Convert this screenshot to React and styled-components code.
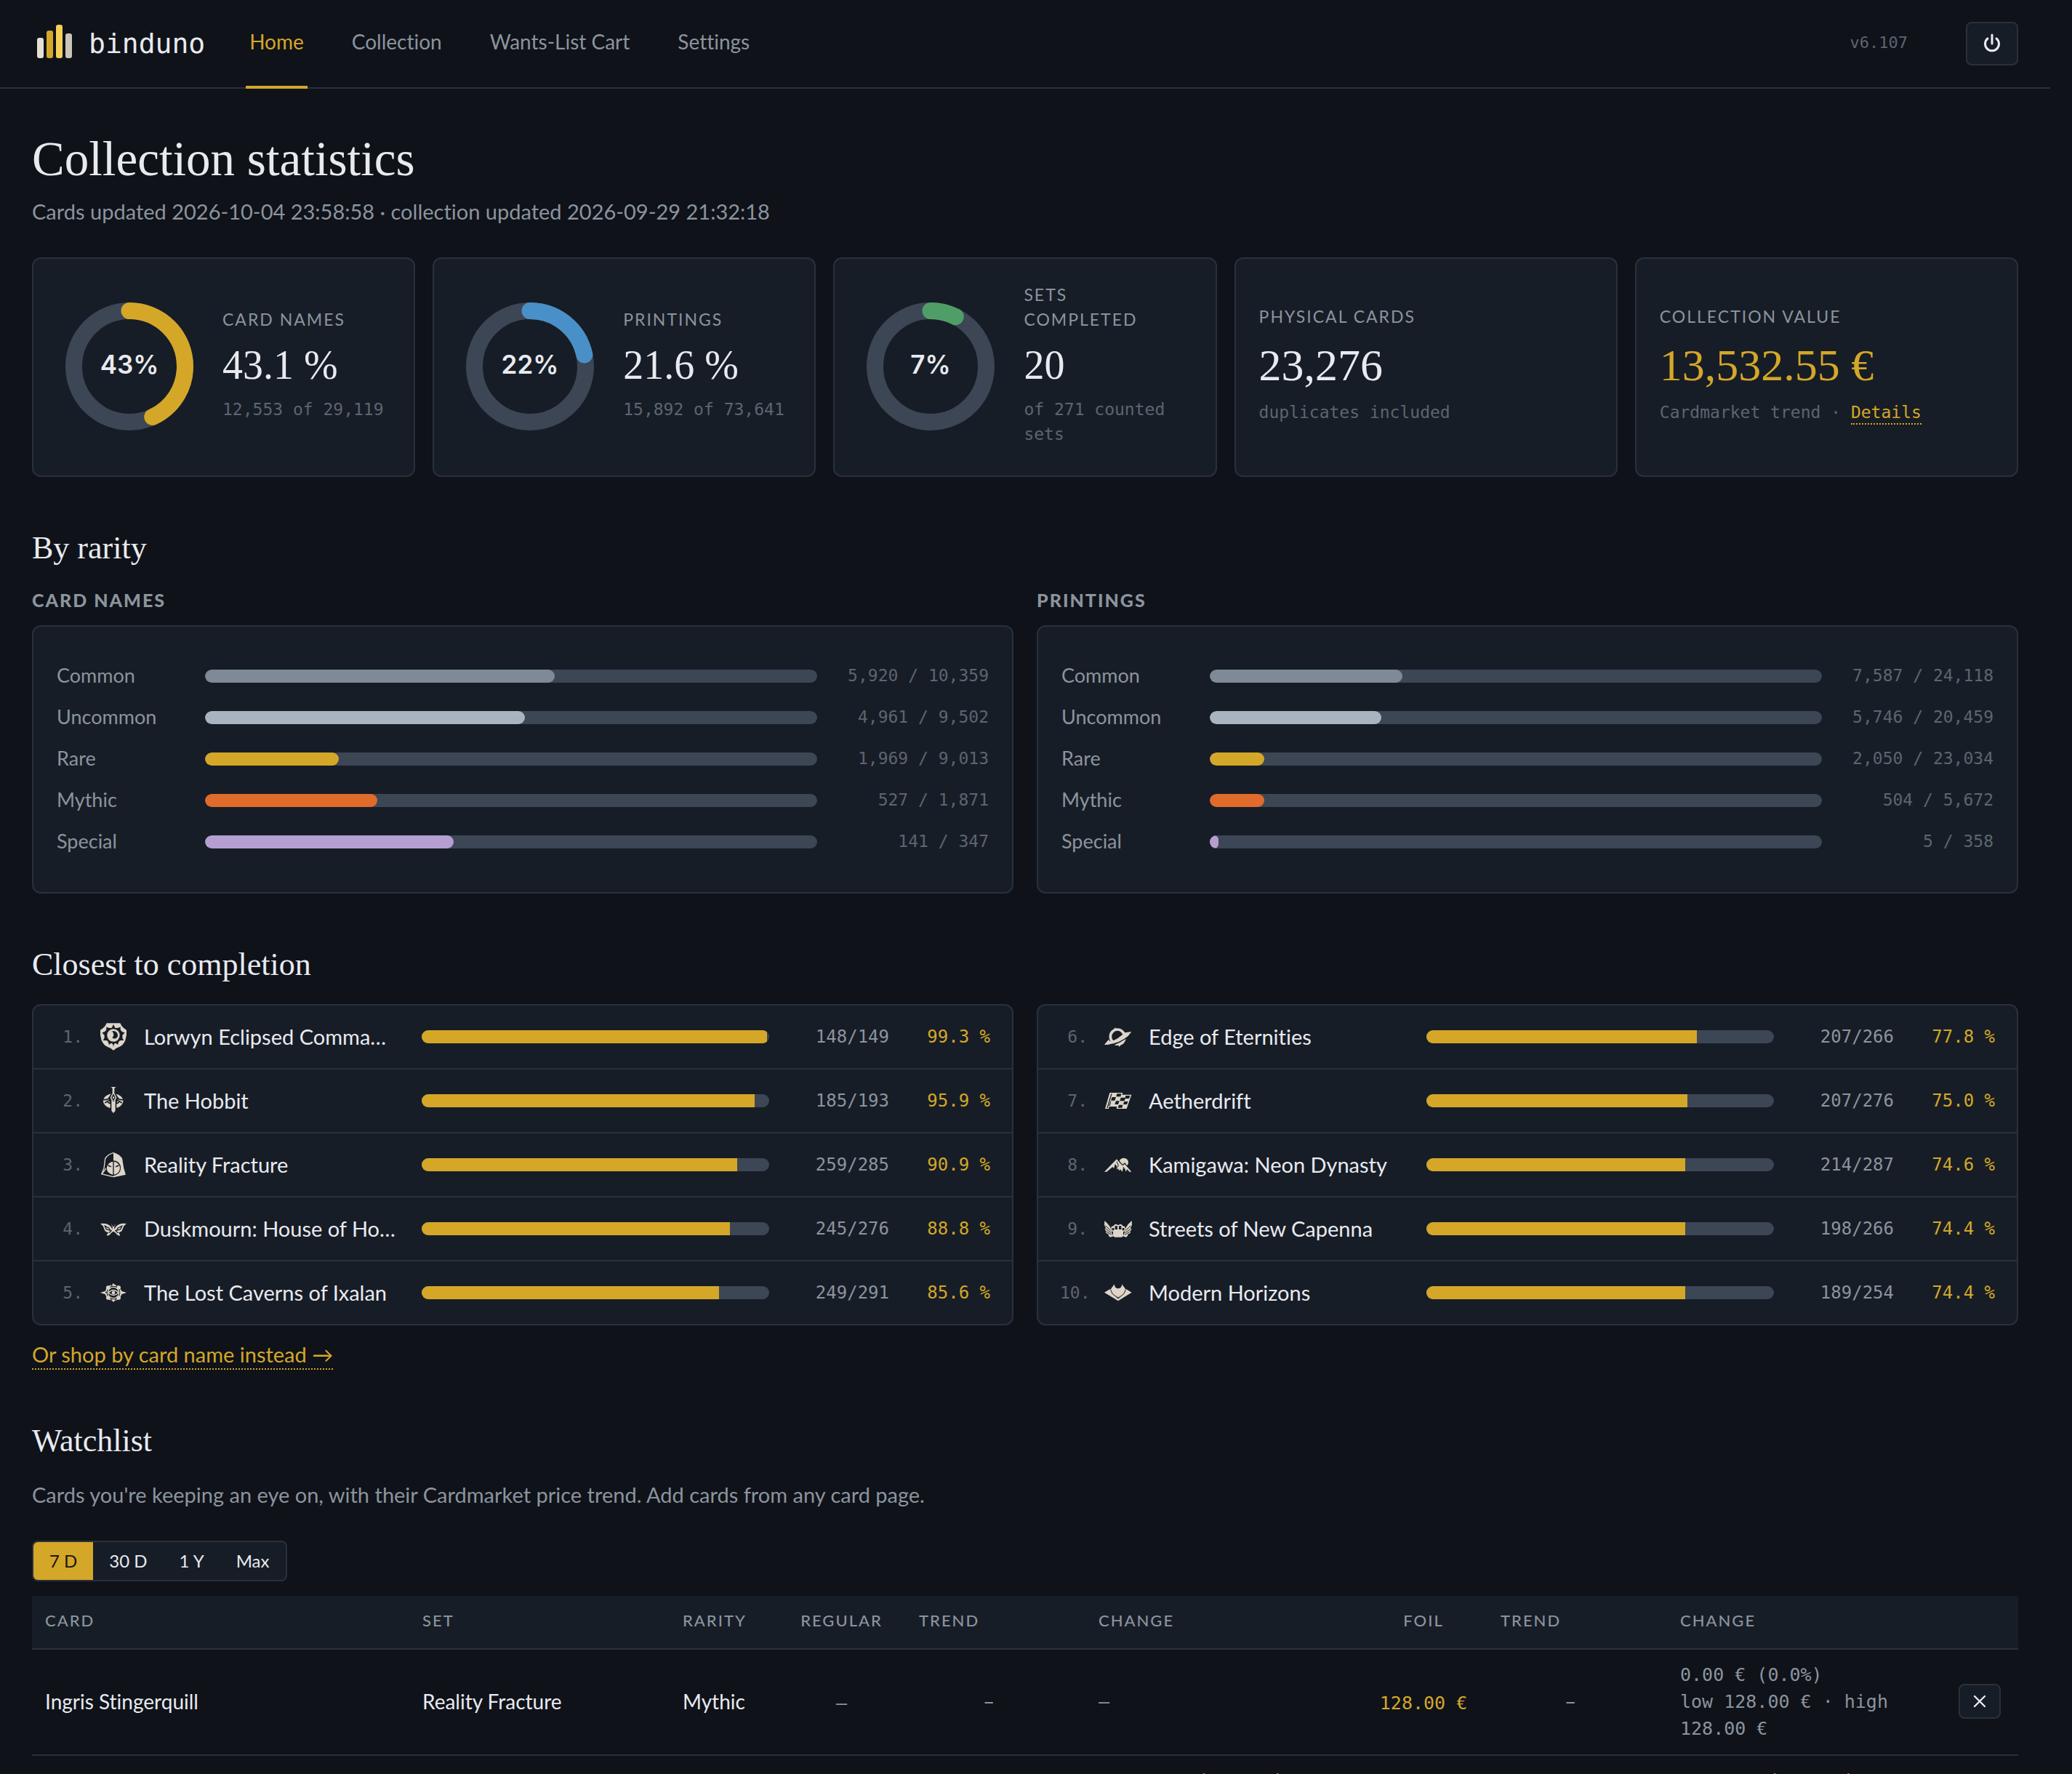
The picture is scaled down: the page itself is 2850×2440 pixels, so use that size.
import React, { useState } from "react";
import styled, { createGlobalStyle } from "styled-components";

const bg = "#0f1219";
const panel = "#171d26";
const line = "#2a303b";
const track = "#3c4655";
const gold = "#d4a729";
const text = "#e8eaf0";
const muted = "#8b949e";
const faint = "#5c6570";
const bone = "#dcd5c8";

const sans = `"Lato", "Open Sans", sans-serif`;
const serif = `"Liberation Serif", serif`;
const mono = `"DejaVu Sans Mono", "Liberation Mono", monospace`;

const GlobalStyle = createGlobalStyle`
  * {
    box-sizing: border-box;
  }

  body {
    margin: 0;
    background: ${bg};
    color: ${text};
    font-family: ${sans};
    font-size: 29px;
    font-variant-ligatures: none;
  }

  button {
    font: inherit;
    color: inherit;
    padding: 0;
    cursor: pointer;
  }
`;

const Page = styled.div`
  height: 100vh;
  padding-right: 30px;
  overflow: hidden auto;
  scrollbar-width: none;
`;

const Header = styled.header`
  height: 122px;
  padding: 0 44px;
  border-bottom: 2px solid ${line};

  display: flex;
  align-items: center;
`;

const Brand = styled.a`
  display: flex;
  align-items: center;
  gap: 14px;

  margin-right: 56px;

  color: ${text};
  font-family: ${mono};
  font-size: 38px;
  text-decoration: none;
`;

const Nav = styled.nav`
  align-self: stretch;
  flex-grow: 1;

  display: flex;
  gap: 56px;

  margin-bottom: -2px;
`;

const NavLink = styled.a`
  display: flex;
  align-items: center;

  padding: 0 5px 4px;
  border-bottom: 4px solid ${({ $active }) => ($active ? gold : "transparent")};

  color: ${({ $active }) => ($active ? gold : muted)};
  font-size: 28px;
  text-decoration: none;
`;

const Version = styled.span`
  margin-right: 80px;
  padding-bottom: 4px;

  color: ${faint};
  font-family: ${mono};
  font-size: 22px;
`;

const IconButton = styled.button`
  width: ${({ $small }) => ($small ? 58 : 72)}px;
  height: ${({ $small }) => ($small ? 48 : 60)}px;

  display: flex;
  align-items: center;
  justify-content: center;

  border: 2px solid ${line};
  border-radius: 8px;
  background: ${panel};
`;

const Main = styled.main`
  padding: 56px 44px 0;
`;

const PageTitle = styled.h1`
  margin: 0;

  font-family: ${serif};
  font-size: 67px;
  font-weight: 400;
  line-height: 80px;
`;

const Lead = styled.p`
  margin: ${({ $top }) => $top}px 0 0;

  color: ${muted};
  line-height: 38px;
`;

const StatGrid = styled.div`
  display: grid;
  grid-template-columns: repeat(5, minmax(0, 1fr));
  gap: 24px;

  margin-top: 44px;
`;

const StatCard = styled.section`
  min-height: 302px;

  display: flex;
  align-items: center;
  gap: 28px;

  padding: 31px 32px;
  border: 2px solid ${line};
  border-radius: 12px;
  background: ${panel};
`;

const StatBody = styled.div`
  padding-bottom: 8px;
`;

const RingSvg = styled.svg`
  width: 200px;
  height: 200px;
  flex-shrink: 0;
`;

const RingText = styled.text`
  fill: ${text};
  font-family: "Inter", sans-serif;
  font-size: 35px;
  font-weight: 600;
  text-anchor: middle;
`;

const StatLabel = styled.h2`
  margin: 0;

  color: ${muted};
  font-size: 23px;
  font-weight: 400;
  line-height: 34px;
  letter-spacing: 2px;
  text-transform: uppercase;
  white-space: pre-line;
`;

const StatValue = styled.div`
  margin: 14px 0 12px;

  color: ${({ $gold }) => ($gold ? gold : text)};
  font-family: ${serif};
  font-size: ${({ $large }) => ($large ? 62 : 56)}px;
  line-height: ${({ $large }) => ($large ? 72 : 64)}px;
`;

const StatNote = styled.div`
  color: ${faint};
  font-family: ${mono};
  font-size: 23px;
  line-height: 34px;
`;

const DottedLink = styled.a`
  display: inline-block;

  border-bottom: 2px dotted ${gold};

  color: ${gold};
  line-height: ${({ $tight }) => ($tight ? 30 : 38)}px;
  text-decoration: none;
`;

const Section = styled.section`
  margin-top: 70px;
`;

const SectionTitle = styled.h2`
  margin: 0;

  font-family: ${serif};
  font-size: 44px;
  font-weight: 400;
  line-height: 56px;
`;

const Columns = styled.div`
  display: grid;
  grid-template-columns: repeat(2, minmax(0, 1fr));
  gap: 32px;

  margin-top: 26px;
`;

const GroupTitle = styled.h3`
  margin: 0 0 18px;

  color: ${muted};
  font-size: 25px;
  font-weight: 900;
  line-height: 34px;
  letter-spacing: 2px;
  text-transform: uppercase;
`;

const Panel = styled.div`
  padding: 39px 32px 41px;
  border: 2px solid ${line};
  border-radius: 12px;
  background: ${panel};
`;

const RarityRow = styled.div`
  height: 57px;

  display: grid;
  grid-template-columns: 180px minmax(0, 1fr) 212px;
  align-items: center;
  gap: 24px;

  color: ${muted};
  font-size: 27px;
`;

const RarityName = styled.span`
  padding-bottom: 2px;
`;

const Amount = styled.span`
  padding-bottom: 2px;

  color: ${faint};
  font-family: ${mono};
  font-size: 23px;
  text-align: right;
`;

const Track = styled.div`
  height: 18px;

  overflow: hidden;

  border-radius: 9px;
  background: ${track};
`;

const Fill = styled.div`
  height: 100%;

  border-radius: ${({ $round }) => ($round ? 9 : 0)}px;
  background: ${({ $color }) => $color};
`;

const SetList = styled.ol`
  margin: 0;
  padding: 0;
  border: 2px solid ${line};
  border-radius: 12px;
  background: ${panel};

  list-style: none;
`;

const SetRow = styled.li`
  height: 88px;

  display: grid;
  grid-template-columns: 38px 36px minmax(0, 358px) minmax(0, 1fr) 141px 115px;
  align-items: center;
  gap: 24px;

  padding: 0 30px;
  border-bottom: 2px solid ${line};

  &:last-child {
    height: 86px;
    border-bottom: 0;
  }
`;

const Rank = styled.span`
  color: ${faint};
  font-family: ${mono};
  font-size: 23px;
  text-align: right;
`;

const SetIcon = styled.svg`
  width: 42px;
  height: 42px;
  justify-self: center;
`;

const SetName = styled.span`
  margin-right: 10px;

  overflow: hidden;
  text-overflow: ellipsis;
  white-space: nowrap;

  line-height: 38px;
`;

const Count = styled.span`
  color: ${({ $gold }) => ($gold ? gold : muted)};
  font-family: ${mono};
  font-size: 24px;
  text-align: right;
`;

const ShopLine = styled.div`
  display: flex;

  margin-top: 21px;
`;

const RangeGroup = styled.div`
  width: max-content;
  height: 56px;

  display: flex;

  margin: 44px 0 20px;
  overflow: hidden;

  border: 2px solid ${line};
  border-radius: 8px;
  background: ${panel};
`;

const RangeButton = styled.button`
  padding: 0 22px 2px;
  border: 0;
  background: ${({ $active }) => ($active ? gold : "transparent")};

  color: ${({ $active }) => ($active ? "#1a160b" : text)};
  font-size: 24px;
`;

const Table = styled.table`
  width: 100%;

  border-collapse: separate;
  border-spacing: 0;
  table-layout: fixed;
`;

const Th = styled.th`
  width: ${({ $width }) => ($width ? `${$width}px` : "auto")};
  height: 74px;

  padding: 0 18px 5px;
  border-bottom: 2px solid ${line};
  background: ${panel};

  color: ${muted};
  font-size: 22px;
  font-weight: 500;
  letter-spacing: 2px;
  text-align: ${({ $center }) => ($center ? "center" : "left")};
  text-transform: uppercase;
`;

const Td = styled.td`
  height: 146px;

  padding: 15px 18px 17px;
  border-bottom: 2px solid ${line};

  font-size: 28px;
  text-align: ${({ $center }) => ($center ? "center" : "left")};
`;

const Spark = styled.div`
  width: 192px;

  color: ${muted};
  text-align: center;
`;

const Price = styled.span`
  color: ${({ $set }) => ($set ? gold : muted)};
  font-family: ${mono};
  font-size: 25px;
`;

const Change = styled.div`
  min-height: 111px;

  display: flex;
  flex-direction: column;
  justify-content: ${({ $down }) => ($down ? "flex-start" : "center")};

  color: ${({ $down }) => ($down ? "#d98c8c" : muted)};
  font-family: ${mono};
  font-size: 25px;
  line-height: 37px;
`;

const STATS = [
  { label: "Card names", value: "43.1 %", note: "12,553 of 29,119", percent: 43.1, color: gold },
  { label: "Printings", value: "21.6 %", note: "15,892 of 73,641", percent: 21.6, color: "#4a90c8" },
  { label: "Sets\ncompleted", value: "20", note: "of 271 counted sets", percent: 7.4, color: "#4f9e68" },
];

const RARITY_COLORS = {
  Common: "#7f8a97",
  Uncommon: "#a9b4c1",
  Rare: gold,
  Mythic: "#e06b2b",
  Special: "#b59fd0",
};

const RARITIES = [
  {
    title: "Card names",
    rows: [
      ["Common", 5920, 10359],
      ["Uncommon", 4961, 9502],
      ["Rare", 1969, 9013],
      ["Mythic", 527, 1871],
      ["Special", 141, 347],
    ],
  },
  {
    title: "Printings",
    rows: [
      ["Common", 7587, 24118],
      ["Uncommon", 5746, 20459],
      ["Rare", 2050, 23034],
      ["Mythic", 504, 5672],
      ["Special", 5, 358],
    ],
  },
];

// Set symbols share a 126 x 126 grid; panel-coloured shapes cut into the bone ones.
const SYMBOLS = {
  shield: (
    <>
      <path
        fill={bone}
        d="M35 7H91L97 18Q106 30 117 35Q119 58 112 78Q102 100 88 104Q74 108 63 119Q52 108 38 104Q24 100 14 78Q7 58 9 35Q20 30 29 18Z"
      />
      <path
        fill={panel}
        d="M63 12L70 26Q82 30 92 22L92 34Q97 44 110 46L100 57Q98 68 106 78L92 78Q82 82 82 96L72 89Q64 90 63 106Q62 90 54 89L44 96Q44 82 34 78L20 78Q28 68 26 57L16 46Q29 44 34 34L34 22Q44 30 56 26Z"
      />
      <circle cx="63" cy="57" r="26" fill={bone} />
      <circle cx="63" cy="57" r="18" fill={panel} />
      <path fill={bone} d="M58 40A18 18 0 1 0 80 62A13 13 0 0 1 58 66Q70 58 58 40Z" />
    </>
  ),
  sword: (
    <>
      <ellipse cx="62" cy="64" rx="41" ry="30" fill={bone} />
      <path
        fill="none"
        stroke={panel}
        strokeWidth="5"
        d="M20 58Q40 62 52 44M104 58Q86 62 74 44M28 72L50 58M98 72L76 58M38 66Q46 76 52 72M88 66Q80 76 74 72"
      />
      <path fill={panel} d="M57 28L42 52L50 74V96H76V74L84 52L69 28Z" />
      <path fill={bone} d="M53 6H73L67 12V32L76 50L71 60L71 104L63 114L55 104L55 60L50 50L59 32V12Z" />
      <path fill="none" stroke={panel} strokeWidth="4" d="M63 38L57 50L63 60L69 50ZM63 62V66" />
    </>
  ),
  hood: (
    <>
      <path fill={bone} d="M63 12Q88 20 99 36L106 78L114 104L63 115Z" />
      <path
        fill="none"
        stroke={bone}
        strokeWidth="4"
        d="M63 14Q39 21 29 38L24 78L14 101L63 113M33 78L16 100"
      />
      <path fill={panel} d="M63 46Q84 47 92 66Q96 84 86 97Q76 107 63 109Q50 107 40 97Q30 84 34 66Q42 47 63 46Z" />
      <path fill={bone} d="M61 50Q42 52 36 72Q34 88 44 96Q52 102 61 104Z" />
      <path fill={bone} d="M65 50Q82 52 89 70Q92 86 82 96Q74 102 65 104Z" />
      <path fill={panel} d="M38 64Q50 64 56 73Q44 74 38 64ZM88 64Q76 64 70 73Q82 74 88 64Z" />
    </>
  ),
  moth: (
    <>
      <path
        fill={bone}
        d="M9 42Q34 38 48 50Q56 56 58 66L60 54H66L68 66Q70 56 78 50Q92 38 117 42L106 52L98 72Q92 78 84 79L90 88L88 93L78 88L72 80L63 74L54 80L48 88L38 93L36 88L42 79Q34 78 28 72L20 52Z"
      />
      <path
        fill="none"
        stroke={panel}
        strokeWidth="4"
        d="M28 52L44 60L50 70L34 66ZM98 52L82 60L76 70L92 66ZM44 80L56 70M82 80L70 70"
      />
      <path fill={bone} d="M55 42L60 54H57ZM71 42L66 54H69Z" />
    </>
  ),
  sun: (
    <>
      <path fill={bone} d="M9 63L30 56V70ZM117 63L96 56V70ZM63 23L69 34H57ZM63 103L69 92H57Z" />
      <circle cx="63" cy="63" r="31" fill="none" stroke={bone} strokeWidth="6" strokeDasharray="16 4" />
      <g fill={bone}>
        <circle cx="41" cy="42" r="8" />
        <circle cx="85" cy="42" r="8" />
        <circle cx="41" cy="84" r="8" />
        <circle cx="85" cy="84" r="8" />
      </g>
      <circle cx="63" cy="63" r="23" fill="none" stroke={bone} strokeWidth="4" />
      <path fill="none" stroke={bone} strokeWidth="4" d="M42 63Q63 42 84 63Q63 84 42 63Z" />
      <circle cx="63" cy="63" r="7" fill={bone} />
    </>
  ),
  planet: (
    <>
      <circle cx="60" cy="62" r="29" fill="none" stroke={bone} strokeWidth="11" />
      <path fill={bone} d="M40 38L52 24L54 34ZM76 92L68 104L64 92Z" />
      <path fill={panel} d="M8 106Q60 102 122 52L110 36L92 42L96 50Q72 74 34 84Z" />
      <path fill={bone} d="M6 96L24 74Q26 82 34 82Q62 74 90 46L118 42L104 60Q64 94 6 96Z" />
      <path fill={bone} d="M46 98Q76 92 96 72Q88 94 74 97L68 104L66 99Z" />
    </>
  ),
  flag: (
    <>
      <path fill={bone} d="M28 30H82L79 38H118L98 96H56L58 87H26L24 96H9Z" />
      <path
        fill={panel}
        d="M34 34L16 93H20L38 34ZM58 34H76L73 46H55ZM38 48H54L49 62H33ZM74 50L93 50L89 64H70ZM94 42H112L108 54H91ZM54 64H68L63 78H49ZM88 66H104L99 78H84ZM31 66L34 66L29 84H25ZM66 80H82L79 92H62Z"
      />
    </>
  ),
  mountain: (
    <>
      <circle cx="86" cy="54" r="19" fill={bone} />
      <path fill={panel} d="M4 96L57 34L74 54L82 62L90 54L124 96Z" />
      <path
        fill={bone}
        d="M6 92L57 40L72 58L82 67L90 60L118 92H110L100 82L94 92L92 80L84 76L80 92L72 82L68 88L62 78L58 84V70L50 60L46 78L40 72L30 80L16 92Z"
      />
      <path fill="none" stroke={panel} strokeWidth="3" d="M57 50L64 66L60 74M84 72L88 80" />
    </>
  ),
  wings: (
    <>
      <path
        fill={bone}
        d="M7 30Q22 42 32 60L38 84L44 94L30 98L22 90L24 86L12 80L14 74L8 66L12 60L6 48ZM119 30Q104 42 94 60L88 84L82 94L96 98L104 90L102 86L114 80L112 74L118 66L114 60L120 48Z"
      />
      <path
        fill="none"
        stroke={panel}
        strokeWidth="3"
        d="M10 50L32 70M12 64L34 80M16 76L36 88M116 50L94 70M114 64L92 80M110 76L90 88"
      />
      <path
        fill={bone}
        d="M34 60Q34 52 44 52Q46 44 54 44L63 48L72 44Q80 44 82 52Q92 52 92 60V72L84 76V92L78 98H48L42 92V76L34 72Z"
      />
      <path fill={panel} d="M38 60H46V70H38ZM50 52H60V66H50ZM66 52H76V66H66ZM80 60H88V70H80Z" />
    </>
  ),
  horizon: (
    <>
      <path fill={bone} d="M6 62L30 48L63 82L96 48L119 62L63 97Z" />
      <path fill={panel} d="M33 44L63 88L93 44Z" />
      <path fill={bone} d="M48 28Q47 44 63 46Q79 44 78 28L92 46Q94 58 86 64L63 83L40 64Q32 58 34 46Z" />
      <path fill="none" stroke={panel} strokeWidth="3" d="M32 52L40 68L63 87L86 68L94 52" />
    </>
  ),
};

const SETS = [
  [
    ["Lorwyn Eclipsed Commander", "shield", 148, 149],
    ["The Hobbit", "sword", 185, 193],
    ["Reality Fracture", "hood", 259, 285],
    ["Duskmourn: House of Horror", "moth", 245, 276],
    ["The Lost Caverns of Ixalan", "sun", 249, 291],
  ],
  [
    ["Edge of Eternities", "planet", 207, 266],
    ["Aetherdrift", "flag", 207, 276],
    ["Kamigawa: Neon Dynasty", "mountain", 214, 287],
    ["Streets of New Capenna", "wings", 198, 266],
    ["Modern Horizons", "horizon", 189, 254],
  ],
];

const Logo = () => (
  <svg width="64" height="60" viewBox="0 0 64 60" aria-hidden="true">
    <rect x="7" y="22" width="9" height="28" rx="3" fill="#e6e0d4" />
    <rect x="20" y="12" width="9" height="38" rx="3" fill={gold} />
    <rect x="33" y="4" width="9" height="46" rx="3" fill="#f6cf57" />
    <rect x="46" y="16" width="9" height="34" rx="3" fill="#cbc5b8" />
  </svg>
);

const PowerIcon = () => (
  <svg width="28" height="28" viewBox="0 0 28 28" fill="none" stroke={text} strokeWidth="3" strokeLinecap="round">
    <path d="M14 2V14M8 7A9.5 9.5 0 1 0 20 7" />
  </svg>
);

const CloseIcon = () => (
  <svg width="20" height="20" viewBox="0 0 20 20" fill="none" stroke={text} strokeWidth="2.4" strokeLinecap="round">
    <path d="M3 3L17 17M17 3L3 17" />
  </svg>
);

const Ring = ({ percent, color }) => {
  const radius = 76.5;
  const length = 2 * Math.PI * radius;

  return (
    <RingSvg viewBox="0 0 200 200">
      <g fill="none" strokeWidth="23">
        <circle cx="100" cy="99" r={radius} stroke={track} />
        <circle
          cx="100"
          cy="99"
          r={radius}
          stroke={color}
          strokeLinecap="round"
          strokeDasharray={`${(length * percent) / 100} ${length}`}
          transform="rotate(-90 100 99)"
        />
      </g>
      <RingText x="100" y="109">
        {Math.round(percent)}%
      </RingText>
    </RingSvg>
  );
};

const Bar = ({ value, total, color = gold, round }) => (
  <Track>
    <Fill $color={color} $round={round} style={{ width: `${(value / total) * 100}%` }} />
  </Track>
);

const Rarity = ({ title, rows }) => (
  <div>
    <GroupTitle>{title}</GroupTitle>
    <Panel>
      {rows.map(([name, owned, total]) => (
        <RarityRow key={name}>
          <RarityName>{name}</RarityName>
          <Bar value={owned} total={total} color={RARITY_COLORS[name]} round />
          <Amount>
            {owned.toLocaleString("en-US")} / {total.toLocaleString("en-US")}
          </Amount>
        </RarityRow>
      ))}
    </Panel>
  </div>
);

const Sets = ({ sets, start }) => (
  <SetList>
    {sets.map(([name, symbol, owned, total], index) => (
      <SetRow key={name}>
        <Rank>{start + index}.</Rank>
        <SetIcon viewBox="0 0 126 126" aria-hidden="true">
          {SYMBOLS[symbol]}
        </SetIcon>
        <SetName title={name}>{name}</SetName>
        <Bar value={owned} total={total} />
        <Count>
          {owned}/{total}
        </Count>
        <Count $gold>{((owned / total) * 100).toFixed(1)} %</Count>
      </SetRow>
    ))}
  </SetList>
);

const Watchlist = () => (
  <Table>
    <thead>
      <tr>
        <Th>Card</Th>
        <Th $width={358}>Set</Th>
        <Th $width={148}>Rarity</Th>
        <Th $width={177} $center>
          Regular
        </Th>
        <Th $width={247}>Trend</Th>
        <Th $width={377}>Change</Th>
        <Th $width={176} $center>
          Foil
        </Th>
        <Th $width={247}>Trend</Th>
        <Th $width={383}>Change</Th>
        <Th $width={100} aria-label="Remove" />
      </tr>
    </thead>
    <tbody>
      <tr>
        <Td>Ingris Stingerquill</Td>
        <Td>Reality Fracture</Td>
        <Td>Mythic</Td>
        <Td $center>
          <Price>–</Price>
        </Td>
        <Td>
          <Spark>–</Spark>
        </Td>
        <Td>
          <Change>–</Change>
        </Td>
        <Td $center>
          <Price $set>128.00 €</Price>
        </Td>
        <Td>
          <Spark>–</Spark>
        </Td>
        <Td>
          <Change>
            <span>0.00 € (0.0%)</span>
            <span>low 128.00 € · high 128.00 €</span>
          </Change>
        </Td>
        <Td>
          <IconButton $small aria-label="Remove Ingris Stingerquill">
            <CloseIcon />
          </IconButton>
        </Td>
      </tr>
      <tr>
        <Td colSpan={5} />
        <Td>
          <Change $down>−10.65 € (−70.1%)</Change>
        </Td>
        <Td colSpan={2} />
        <Td>
          <Change $down>−5.51 € (−30.2%)</Change>
        </Td>
        <Td />
      </tr>
    </tbody>
  </Table>
);

const App = () => {
  const [range, setRange] = useState("7 D");

  return (
    <Page>
      <GlobalStyle />
      <Header>
        <Brand href="#home">
          <Logo />
          binduno
        </Brand>
        <Nav>
          <NavLink href="#home" $active>
            Home
          </NavLink>
          <NavLink href="#collection">Collection</NavLink>
          <NavLink href="#cart">Wants-List Cart</NavLink>
          <NavLink href="#settings">Settings</NavLink>
        </Nav>
        <Version>v6.107</Version>
        <IconButton aria-label="Log out">
          <PowerIcon />
        </IconButton>
      </Header>

      <Main>
        <PageTitle>Collection statistics</PageTitle>
        <Lead $top={14}>Cards updated 2026-10-04 23:58:58 · collection updated 2026-09-29 21:32:18</Lead>

        <StatGrid>
          {STATS.map(({ label, value, note, percent, color }) => (
            <StatCard key={label}>
              <Ring percent={percent} color={color} />
              <StatBody>
                <StatLabel>{label}</StatLabel>
                <StatValue>{value}</StatValue>
                <StatNote>{note}</StatNote>
              </StatBody>
            </StatCard>
          ))}
          <StatCard>
            <StatBody>
              <StatLabel>Physical cards</StatLabel>
              <StatValue $large>23,276</StatValue>
              <StatNote>duplicates included</StatNote>
            </StatBody>
          </StatCard>
          <StatCard>
            <StatBody>
              <StatLabel>Collection value</StatLabel>
              <StatValue $large $gold>
                13,532.55 €
              </StatValue>
              <StatNote>
                Cardmarket trend ·{" "}
                <DottedLink href="#value" $tight>
                  Details
                </DottedLink>
              </StatNote>
            </StatBody>
          </StatCard>
        </StatGrid>

        <Section>
          <SectionTitle>By rarity</SectionTitle>
          <Columns>
            {RARITIES.map((group) => (
              <Rarity key={group.title} {...group} />
            ))}
          </Columns>
        </Section>

        <Section>
          <SectionTitle>Closest to completion</SectionTitle>
          <Columns>
            <Sets sets={SETS[0]} start={1} />
            <Sets sets={SETS[1]} start={6} />
          </Columns>
          <ShopLine>
            <DottedLink href="#shop">Or shop by card name instead →</DottedLink>
          </ShopLine>
        </Section>

        <Section>
          <SectionTitle>Watchlist</SectionTitle>
          <Lead $top={27}>
            Cards you're keeping an eye on, with their Cardmarket price trend. Add cards from any card page.
          </Lead>
          <RangeGroup role="group" aria-label="Price range">
            {["7 D", "30 D", "1 Y", "Max"].map((name) => (
              <RangeButton
                key={name}
                $active={name === range}
                aria-pressed={name === range}
                onClick={() => setRange(name)}
              >
                {name}
              </RangeButton>
            ))}
          </RangeGroup>
          <Watchlist />
        </Section>
      </Main>
    </Page>
  );
};

export default App;
